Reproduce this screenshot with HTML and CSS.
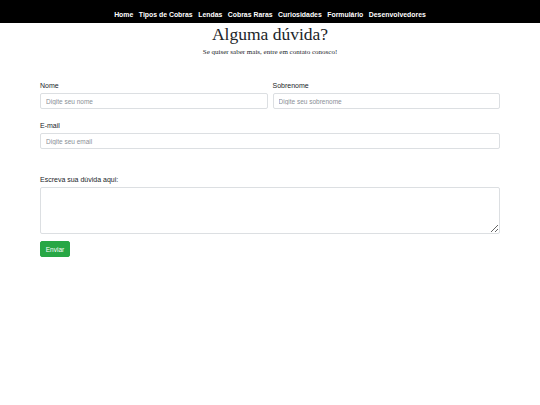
FILE: index.html
```html
<!DOCTYPE html>
<html lang="pt-BR">
<head>
<meta charset="utf-8">
<title>Alguma dúvida?</title>
<link rel="stylesheet" href="styles.css">
</head>
<body>
<nav class="navbar">
  <ul class="nav-list">
    <li><a href="#">Home</a></li>
    <li><a href="#">Tipos de Cobras</a></li>
    <li><a href="#">Lendas</a></li>
    <li><a href="#">Cobras Raras</a></li>
    <li><a href="#">Curiosidades</a></li>
    <li><a href="#">Formulário</a></li>
    <li><a href="#">Desenvolvedores</a></li>
  </ul>
</nav>
<header class="intro">
  <h1 class="title">Alguma dúvida?</h1>
  <p class="subtitle">Se quiser saber mais, entre em contato conosco!</p>
</header>
<form class="contact-form">
  <div class="row">
    <div class="field">
      <label class="label">Nome</label>
      <input class="input" type="text" placeholder="Digite seu nome">
    </div>
    <div class="field">
      <label class="label">Sobrenome</label>
      <input class="input" type="text" placeholder="Digite seu sobrenome">
    </div>
  </div>
  <div class="field field-email">
    <label class="label">E-mail</label>
    <input class="input" type="email" placeholder="Digite seu email">
  </div>
  <div class="field field-msg">
    <label class="label">Escreva sua dúvida aqui:</label>
    <textarea class="textarea"></textarea>
  </div>
  <button class="btn" type="button">Enviar</button>
</form>
</body>
</html>
```

FILE: styles.css
```css
* { box-sizing: border-box; }
body {
  margin: 0;
  background: #fff;
  font-family: "Liberation Sans", Arial, sans-serif;
  color: #212529;
}
.navbar {
  background: #000;
  height: 23px;
  display: flex;
  align-items: center;
  justify-content: center;
}
.nav-list {
  list-style: none;
  margin: 0;
  padding: 0;
  display: flex;
  gap: 5.5px;
}
.nav-list a {
  color: #fff;
  text-decoration: none;
  font-weight: bold;
  font-size: 6.9px;
}
.intro {
  text-align: center;
}
.title {
  font-family: "Liberation Serif", "Times New Roman", serif;
  font-weight: normal;
  font-size: 17.5px;
  line-height: 20px;
  margin: 0;
  padding-top: 1px;
  color: #212529;
}
.subtitle {
  font-family: "Liberation Serif", "Times New Roman", serif;
  font-size: 7px;
  line-height: 9px;
  margin: 4px 0 0;
}
.contact-form {
  margin: 0 40px;
  padding-top: 24px;
}
.row {
  display: flex;
  gap: 5px;
}
.row .field { flex: 1; }
.field { display: flex; flex-direction: column; }
.label {
  font-size: 7px;
  line-height: 9px;
  color: #212529;
  margin-bottom: 3px;
}
.input {
  height: 16px;
  border: 1px solid #dcdfe2;
  border-radius: 2px;
  padding: 0 5px;
  font-family: "Liberation Sans", Arial, sans-serif;
  font-size: 6.5px;
  color: #495057;
}
.input::placeholder { color: #8a9096; }
.field-email { margin-top: 12px; }
.field-msg { margin-top: 26px; }
.textarea {
  height: 47px;
  border: 1px solid #dcdfe2;
  border-radius: 2px;
  resize: vertical;
}
.btn {
  margin-top: 7px;
  height: 16px;
  width: 30px;
  padding: 0;
  background: #28a745;
  border: 1px solid #28a745;
  border-radius: 2px;
  color: #fff;
  font-family: "Liberation Sans", Arial, sans-serif;
  font-size: 6.5px;
}
```
